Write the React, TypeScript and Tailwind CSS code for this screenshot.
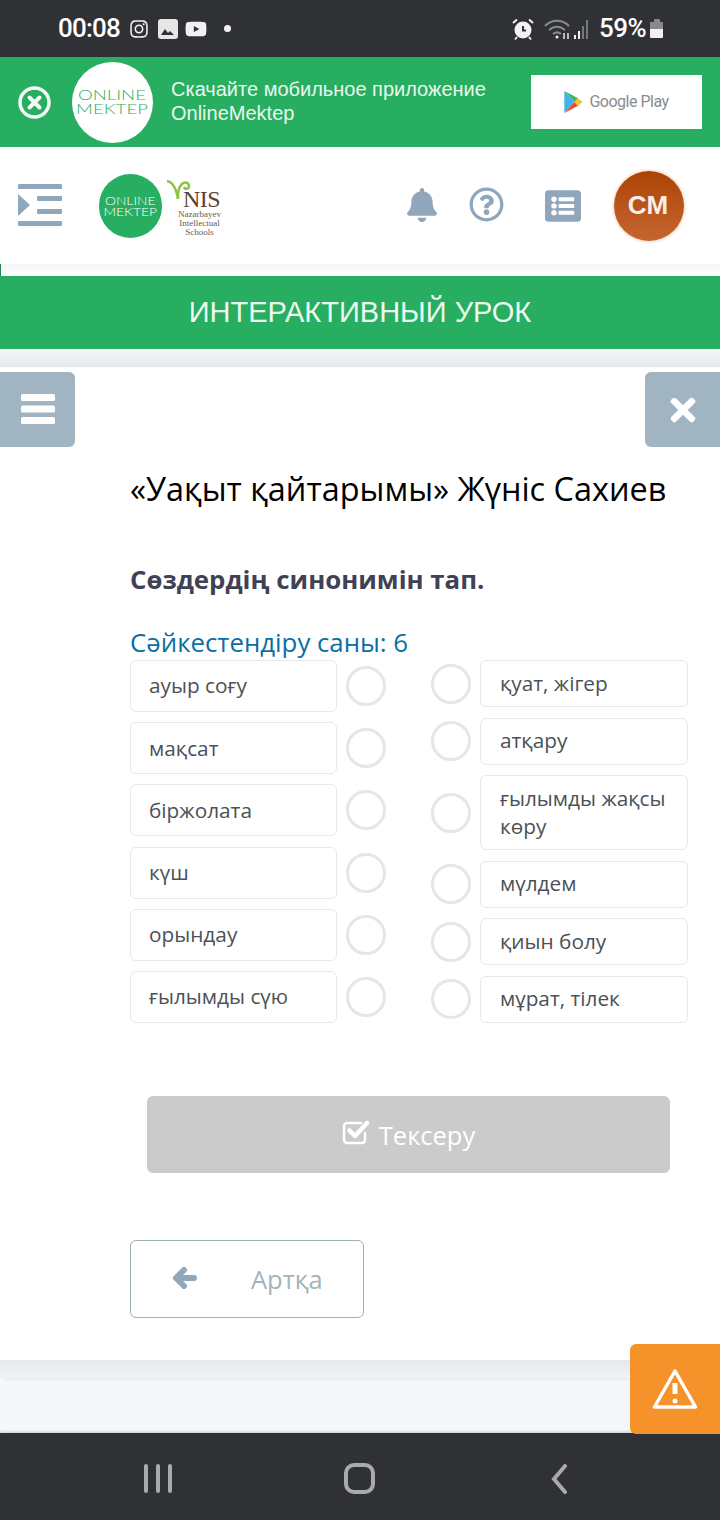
import React from 'react';
import { FaBell, FaInstagram, FaListAlt, FaRegQuestionCircle, FaTimes, FaYoutube } from 'react-icons/fa';

const leftItems = ['ауыр соғу', 'мақсат', 'біржолата', 'күш', 'орындау', 'ғылымды сүю'];

// box = pixel height of the row in the right column
const rightItems = [
  { text: 'қуат, жігер', box: 'h-[47px]' },
  { text: 'атқару', box: 'h-[47px]' },
  { text: 'ғылымды жақсы көру', box: 'h-[75px]' },
  { text: 'мүлдем', box: 'h-[47px]' },
  { text: 'қиын болу', box: 'h-[47px]' },
  { text: 'мұрат, тілек', box: 'h-[47px]' },
];

function StatusBar() {
  return (
    <div className="flex h-[57px] shrink-0 items-center bg-[#303135] pl-[58px] text-white">
      <span className="font-['Roboto',sans-serif] text-[26px] font-medium tracking-[-0.8px]">00:08</span>
      <FaInstagram className="ml-[9px] text-[20px] text-[#f2f2f2]" />
      <svg viewBox="0 0 20 20" className="ml-[9px] h-[20px] w-[20px]">
        <rect width="20" height="20" rx="3" fill="#e6e6e6" />
        <path d="M3 16l4-6 3 4 2-2 4 4z" fill="#303135" />
      </svg>
      <FaYoutube className="ml-[7px] text-[22px] text-[#f2f2f2]" />
      <span className="ml-[17px] h-[7px] w-[7px] rounded-full bg-[#f2f2f2]" />
      <svg viewBox="0 0 24 24" className="ml-[280px] h-[24px] w-[24px]" fill="none" stroke="#f2f2f2" strokeWidth="2">
        <circle cx="12" cy="13" r="7.5" fill="#f2f2f2" />
        <path d="M12 9v4.5h3" stroke="#303135" />
        <path d="M2 6l4-3.5M22 6l-4-3.5M6 20l-2 2.5M18 20l2 2.5" />
      </svg>
      <svg viewBox="0 0 46 24" className="ml-[9px] h-[24px] w-[46px]" fill="none">
        <path d="M1 9c7-7 17-7 24 0M5 13c5-4 11-4 16 0M9 17c2.500-2 5.500-2 8 0" stroke="#8b8c8e" strokeWidth="2" />
        <circle cx="13" cy="20" r="1.500" fill="#f2f2f2" />
        <path d="M20 16v6M24 22v-6" stroke="#e6e6e6" strokeWidth="1.500" />
        <path d="M31 18v4M35 14v8" stroke="#f2f2f2" strokeWidth="2" />
        <path d="M39 9v13M43 3v19" stroke="#77787a" strokeWidth="2" />
      </svg>
      <span className="ml-[9px] font-['Roboto',sans-serif] text-[26px] font-medium tracking-[-0.5px]">59%</span>
      <div className="ml-[4px] flex flex-col items-center">
        <div className="h-[3px] w-[6px] rounded-t-[1px] bg-[#88898b]" />
        <div className="h-[7px] w-[13px] bg-[#88898b]" />
        <div className="h-[9px] w-[13px] rounded-b-[1px] bg-[#f2f2f2]" />
      </div>
    </div>
  );
}

function AppBanner() {
  return (
    <div className="flex h-[90px] shrink-0 items-center bg-[#27ae60]">
      <svg viewBox="0 0 33 33" className="ml-[18px] h-[33px] w-[33px]" fill="none" stroke="#f2fbf5">
        <circle cx="16.500" cy="16.500" r="14.500" strokeWidth="3.500" />
        <path d="M11.500 11.500l10 10M21.500 11.500l-10 10" strokeWidth="4" strokeLinecap="round" />
      </svg>
      <div className="ml-[21px] flex h-[81px] w-[81px] items-center justify-center rounded-full bg-white">
        <div className="flex scale-x-[1.33] flex-col items-center font-['Lato',sans-serif] text-[14px] font-light leading-[14px] text-[#27ae60]">
          <span>ONLINE</span>
          <span>MEKTEP</span>
        </div>
      </div>
      <p className="ml-[18px] w-[340px] pb-[2px] font-['Liberation_Sans',sans-serif] text-[20px] leading-[24px] text-[#e9f8ef]">
        Скачайте мобильное приложение
        <br />
        OnlineMektep
      </p>
      <div className="ml-[20px] flex h-[54px] w-[171px] items-center justify-center gap-[6px] bg-white">
        <svg viewBox="0 0 20 24" className="h-[22px] w-[19px]">
          <path d="M0 0l11 12L0 24z" fill="#3fb4e8" />
          <path d="M0 0l15 8-4 4z" fill="#4caf6a" />
          <path d="M0 24l15-8-4-4z" fill="#e8493f" />
          <path d="M15 8l5 4-5 4-4-4z" fill="#f9c02e" />
        </svg>
        <span className="font-['Roboto',sans-serif] text-[16px] tracking-[-0.5px] text-[#8a8c8e]">Google Play</span>
      </div>
    </div>
  );
}

function SiteHeader() {
  return (
    <div className="flex h-[117px] shrink-0 items-center bg-white pl-[18px]">
      <svg viewBox="0 0 44 42" className="mb-[2px] h-[42px] w-[44px]" fill="#8fa6bb">
        <rect x="0" y="0" width="44" height="5" rx="1" />
        <rect x="19" y="12" width="25" height="5" rx="1" />
        <rect x="19" y="25" width="25" height="5" rx="1" />
        <rect x="0" y="37" width="44" height="5" rx="1" />
        <path d="M0 10l12 11L0 32z" />
      </svg>
      <div className="ml-[37px] flex h-[64px] w-[63px] items-center justify-center rounded-full bg-[#27ae60]">
        <div className="flex scale-x-[1.26] flex-col items-center font-['Lato',sans-serif] text-[11px] font-light leading-[11px] text-white">
          <span>ONLINE</span>
          <span>MEKTEP</span>
        </div>
      </div>
      <div className="relative ml-[4px] flex h-[64px] w-[68px] flex-col items-center justify-end pb-[1px] pr-[1px] font-['Liberation_Serif',serif] text-[#6b5a4e]">
        <svg viewBox="0 0 26 34" className="absolute left-0 top-[1px] h-[34px] w-[26px]" fill="none" stroke="#8cc63f" strokeWidth="2.500">
          <path d="M1 6c5 1 9 6 11 18" />
          <path d="M12 24c0-7 0-11 4-15 3-3 7-1 7 2s-4 4-5 1" />
        </svg>
        <span className="ml-[4px] text-[24px] leading-[22px] tracking-[-0.5px] text-[#5f3f30]">NIS</span>
        <span className="text-[9px] leading-[9px]">Nazarbayev</span>
        <span className="text-[9px] leading-[9px]">Intellectual</span>
        <span className="text-[9px] leading-[9px]">Schools</span>
      </div>
      <FaBell className="mb-[2px] ml-[171px] text-[34px] text-[#8fa6bb]" />
      <FaRegQuestionCircle className="mb-[2px] ml-[30px] text-[35px] text-[#8fa6bb]" />
      <FaListAlt className="ml-[41px] text-[36px] text-[#8fa6bb]" />
      <div className="ml-[33px] flex h-[70px] w-[70px] items-center justify-center rounded-full bg-gradient-to-b from-[#ad4300] to-[#c5662f] pr-[2px] font-['Liberation_Sans',sans-serif] text-[26px] font-bold text-[#f7efe8] shadow-[0_0_3px_1px_#f0d2c0]">
        CM
      </div>
    </div>
  );
}

function MatchColumns() {
  return (
    <div className="ml-[130px] flex w-[558px] justify-between text-[20.8px] text-[#4b5157]">
      <div className="flex h-[363px] w-[256px] flex-col justify-between">
        {leftItems.map(text => (
          <div key={text} className="flex items-center gap-[9px]">
            <div className="flex h-[52px] w-[207px] items-center rounded-[6px] border border-[#e6e8ee] pl-[18px]">{text}</div>
            <span className="h-[40px] w-[40px] rounded-full border-[3px] border-[#e3e6ea]" />
          </div>
        ))}
      </div>
      <div className="flex h-[363px] w-[257px] flex-col justify-between">
        {rightItems.map(item => (
          <div key={item.text} className="flex items-center gap-[9px]">
            <span className="h-[40px] w-[40px] shrink-0 rounded-full border-[3px] border-[#e3e6ea]" />
            <div className={`flex w-[208px] items-center rounded-[6px] border border-[#e6e8ee] pb-[2px] pl-[19px] pr-[10px] leading-[28px] ${item.box}`}>
              {item.text}
            </div>
          </div>
        ))}
      </div>
    </div>
  );
}

function LessonCard() {
  return (
    <div className="h-[993px] shrink-0 bg-white pt-[5px] font-['Open_Sans',sans-serif]">
      <div className="flex justify-between">
        <button type="button" className="flex h-[75px] w-[75px] items-center justify-center rounded-r-[6px] bg-[#a0b4c2]">
          <svg viewBox="0 0 34 30" className="mb-[2px] h-[30px] w-[34px]" fill="#fff">
            <rect y="0" width="34" height="7" rx="1.500" />
            <rect y="11.500" width="34" height="7" rx="1.500" />
            <rect y="23" width="34" height="7" rx="1.500" />
          </svg>
        </button>
        <button type="button" className="flex h-[75px] w-[75px] items-center justify-center rounded-l-[6px] bg-[#a0b4c2] text-white">
          <FaTimes className="text-[36px]" />
        </button>
      </div>
      <h1 className="ml-[130px] mt-[19px] text-[32.4px] leading-[44px] text-black">«Уақыт қайтарымы» Жүніс Сахиев</h1>
      <h2 className="ml-[130px] mt-[51px] text-[25.8px] font-bold leading-[36px] text-[#3f4254]">Сөздердің синонимін тап.</h2>
      <p className="ml-[130px] mt-[28px] text-[25.8px] leading-[34px] text-[#0b6fa4]">Сәйкестендіру саны: 6</p>
      <div className="mt-[1px]">
        <MatchColumns />
      </div>
      <button type="button" className="ml-[147px] mt-[73px] flex h-[77px] w-[523px] items-center justify-center gap-[9px] rounded-[6px] bg-[#cbcbcb] pt-[2px] text-[25.5px] text-white">
        <svg viewBox="0 0 28 26" className="mb-[8px] h-[26px] w-[28px]" fill="none" stroke="#fff" strokeLinecap="round" strokeLinejoin="round">
          <path d="M23 14v7a3 3 0 0 1-3 3H5a3 3 0 0 1-3-3V7a3 3 0 0 1 3-3h14" strokeWidth="2.500" />
          <path d="M7.500 11.500l5.500 5.500L25 4" strokeWidth="4.500" />
        </svg>
        Тексеру
      </button>
      <button type="button" className="ml-[130px] mt-[67px] flex h-[78px] w-[234px] items-center rounded-[6px] border border-[#9fb1b5] pl-[41px] text-[25.5px] text-[#a4b3ba]">
        <svg viewBox="0 0 25 22" className="mb-[3px] h-[22px] w-[25px]" fill="none" stroke="#8fa8bb" strokeWidth="6" strokeLinecap="round" strokeLinejoin="round">
          <path d="M22 11H5M12 3l-8 8 8 8" />
        </svg>
        <span className="ml-[54px]">Артқа</span>
      </button>
    </div>
  );
}

export default function App() {
  return (
    <div className="relative flex h-[1520px] w-[720px] flex-col overflow-hidden bg-[#f5f8fa]">
      <StatusBar />
      <AppBanner />
      <SiteHeader />
      <div className="h-[12px] shrink-0 border-l border-[#1f8a4c] bg-gradient-to-b from-[#f3f4f5] to-white" />
      <div className="flex h-[73px] shrink-0 items-center justify-center bg-[#27ae60] font-['Liberation_Sans',sans-serif] text-[29px] text-[#ecf9f1]">
        ИНТЕРАКТИВНЫЙ УРОК
      </div>
      <div className="h-[18px] shrink-0 bg-gradient-to-b from-[#f7f8f9] to-[#e5e7ea]" />
      <LessonCard />
      <div className="h-[18px] shrink-0 rounded-b-[8px] bg-gradient-to-b from-[#e6e8eb] to-[#f2f3f5] shadow-[0_1px_3px_rgba(0,0,0,0.08)]" />
      <div className="flex-1" />
      <nav className="flex h-[87px] shrink-0 items-center bg-[#303135] pt-[4px] shadow-[0_-1px_3px_rgba(0,0,0,0.2)]">
        <div className="ml-[144px] flex gap-[8px]">
          <span className="h-[29px] w-[4px] rounded-full bg-[#a9aaac]" />
          <span className="h-[29px] w-[4px] rounded-full bg-[#a9aaac]" />
          <span className="h-[29px] w-[4px] rounded-full bg-[#a9aaac]" />
        </div>
        <span className="ml-[172px] h-[31px] w-[31px] rounded-[10px] border-[4px] border-[#a9aaac]" />
        <svg viewBox="0 0 16 30" className="ml-[176px] h-[30px] w-[16px]" fill="none" stroke="#a9aaac" strokeWidth="4" strokeLinecap="round">
          <path d="M14 2L3 15l11 13" />
        </svg>
      </nav>
      <div className="absolute left-[630px] top-[1344px] flex h-[90px] w-[90px] items-center justify-center rounded-l-[6px] bg-[#f5922a]">
        <svg viewBox="0 0 46 42" className="h-[42px] w-[46px]" fill="none" stroke="#fff" strokeWidth="3.500" strokeLinejoin="round">
          <path d="M23 3L2.500 39h41z" />
          <path d="M23 15v11" strokeWidth="5" />
          <circle cx="23" cy="33" r="2.500" fill="#fff" stroke="none" />
        </svg>
      </div>
    </div>
  );
}
